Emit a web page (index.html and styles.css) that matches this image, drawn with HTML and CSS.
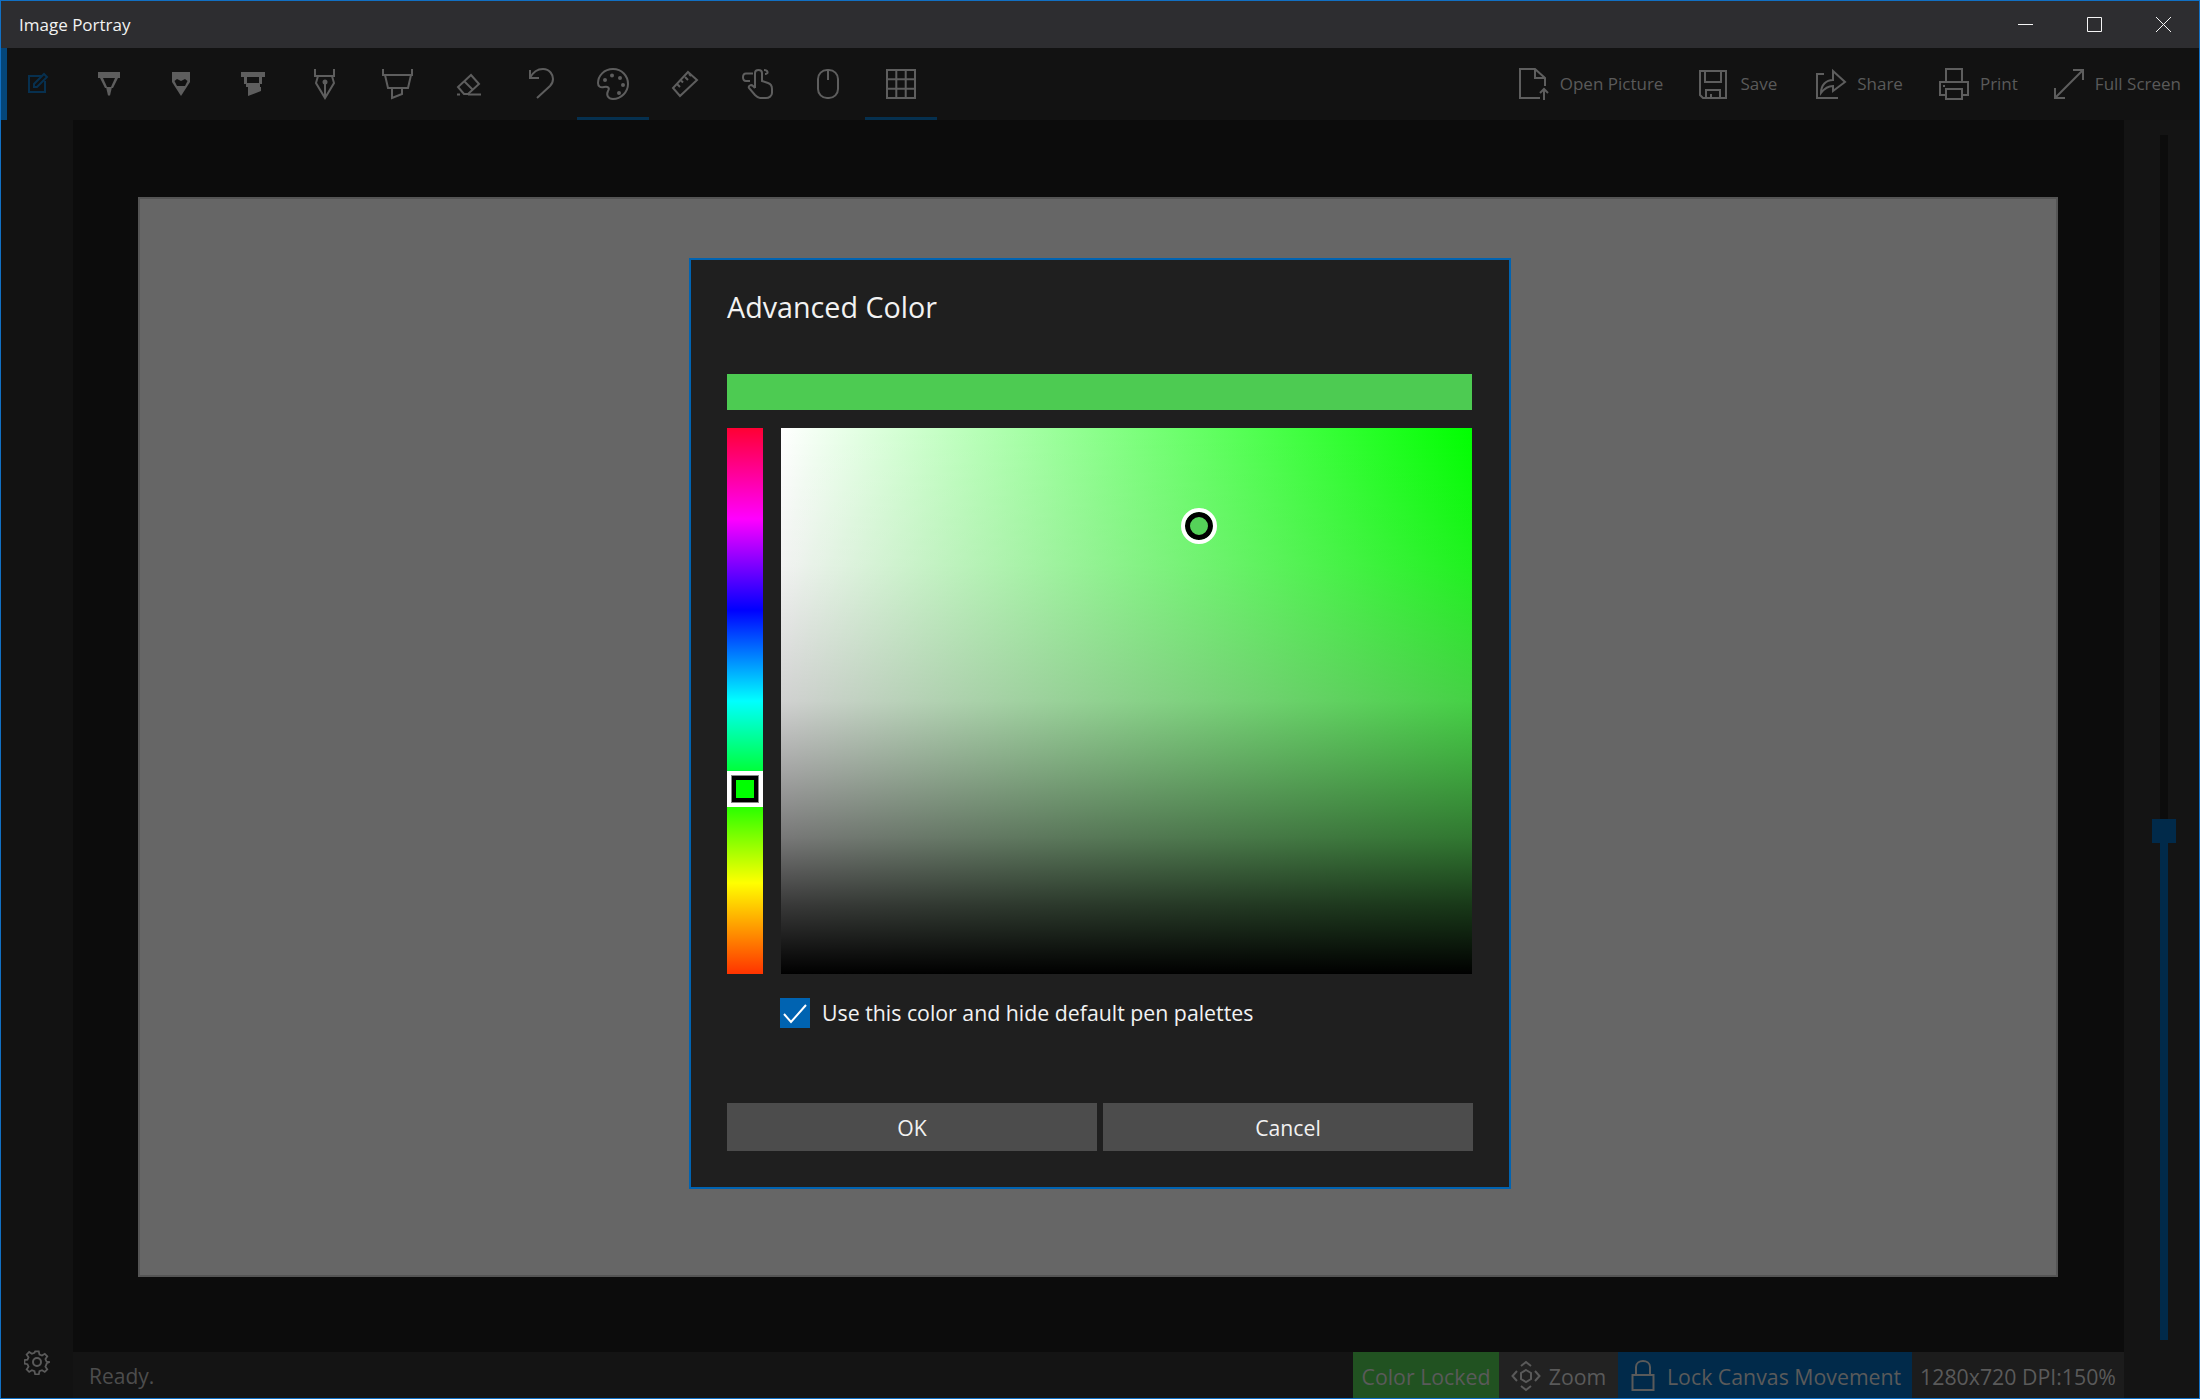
FILE: index.html
```html
<!DOCTYPE html>
<html lang="en">
<head>
<meta charset="utf-8">
<title>Image Portray</title>
<link rel="stylesheet" href="styles.css">
</head>
<body>
<div class="window">
  <header class="titlebar">
    <span class="app-title">Image Portray</span>
    <div class="winctl">
      <svg class="ctl" viewBox="0 0 15 15"><path d="M0 7.500H15"/></svg>
      <svg class="ctl" viewBox="0 0 15 15"><path d="M.5.5H14.500V14.500H.5Z"/></svg>
      <svg class="ctl" viewBox="0 0 15 15"><path d="M0 0L15 15M15 0L0 15"/></svg>
    </div>
  </header>

  <nav class="toolbar">
    <div class="tool tool-accent"><svg class="ico ico-blue" viewBox="0 0 36 36"><path d="M23 10H10V26H26V15"/><path d="M15 21V18L25 8L28 11L18 21Z"/></svg></div>
    <div class="tool"><svg class="ico" viewBox="0 0 36 36"><path class="fill" d="M7 6H29V12H27L22 22H14L9 12H7Z"/><path class="bg" d="M12 12H24L20 21H16Z"/><path class="fill" d="M15 21H21L19 29.500H17Z"/></svg></div>
    <div class="tool"><svg class="ico" viewBox="0 0 36 36"><path class="fill" d="M9 6H27V16L18 30L9 16Z"/><path class="bg" d="M11.500 15L14 13L18 15L22 13L24.500 15L22 20H14Z"/></svg></div>
    <div class="tool"><svg class="ico" viewBox="0 0 36 36"><path class="fill" d="M6 6H30V11H27V18H25V21H26V25L13 30V21H11V18H9V11H6Z"/><path class="bg" d="M12 11H24V17H12Z"/></svg></div>
    <div class="tool"><svg class="ico" viewBox="0 0 36 36"><path d="M8 3V10H27V3"/><path d="M11 10L9 17L18 32L27 17L25 10"/><path d="M18 18V31"/><circle class="fill nostroke" cx="18" cy="16" r="2.500"/></svg></div>
    <div class="tool"><svg class="ico" viewBox="0 0 36 36"><path d="M4 3V9H33V3"/><path d="M6 9L9 22H29L32 9"/><path d="M13 22V32L23 28V22"/></svg></div>
    <div class="tool"><svg class="ico" viewBox="0 0 36 36"><path d="M20 9L28 18L17 28H13L7 21Z"/><path d="M13 15L22 24"/><path d="M6 28.500H9M17 28.500H30"/></svg></div>
    <div class="tool"><svg class="ico" viewBox="0 0 36 36"><path d="M7 4V12H16"/><path d="M7 12C10 6 15 3 20 3C27 3 30 9 30 13C30 17 29 18 27 20L14 32"/></svg></div>
    <div class="tool tool-on"><svg class="ico" viewBox="0 0 36 36"><path d="M18 3C9 3 3 10 3 17C3 20 5 22 9 21C13 20 15 22 13 25C11 29 13 33 18 33C26 33 33 26 33 18C33 10 27 3 18 3Z"/><g class="fill nostroke"><circle cx="10" cy="14" r="2"/><circle cx="17" cy="9.500" r="2"/><circle cx="25" cy="12" r="2"/><circle cx="28" cy="19" r="2"/><circle cx="24" cy="27" r="2"/></g></svg></div>
    <div class="tool"><svg class="ico" viewBox="0 0 36 36"><path d="M21 6L30 14L13 30L6 22Z"/><path d="M10 18L13 21M14 14.500L16 16.500M18 11L21 14M22 8L24 10"/></svg></div>
    <div class="tool"><svg class="ico" viewBox="0 0 36 36"><path d="M16 22V7C16 3 23 3 23 7V15L29 17C32 18 33 20 33 23V27C33 30 30 32 27 32H21C19 32 18 31 16 29L10 22C9 20 12 18 14 20L16 22"/><path d="M14 7.500H7C3 7.500 3 15 7 15H11M25 4C29 4 30 8 26 8"/></svg></div>
    <div class="tool"><svg class="ico" viewBox="0 0 36 36"><rect x="7" y="4" width="20" height="28" rx="9"/><path d="M17 4V14"/></svg></div>
    <div class="tool tool-on"><svg class="ico" viewBox="0 0 36 36"><path d="M4 4H32V32H4ZM13.300 4V32M22.700 4V32M4 13.300H32M4 22.700H32"/></svg></div>

    <div class="commands">
      <div class="cmd"><svg class="ico" viewBox="0 0 36 36"><path d="M25 32H5V3H20L30 12V20M20 3V12H30"/><path d="M29 34V23M25 27L29 23L33 27"/></svg><span class="cmd-label">Open Picture</span></div>
      <div class="cmd cmd-save"><svg class="ico" viewBox="0 0 36 36"><path d="M5 5H31V32H8L5 29Z"/><path d="M10 5V16H26V5"/><path d="M11 32V24H25V32M16 28V32"/></svg><span class="cmd-label">Save</span></div>
      <div class="cmd"><svg class="ico" viewBox="0 0 36 36"><path d="M12 8H5V32H26"/><path d="M9 27C9 19 14 14 21 14V5L33 16L21 25V20C16 20 12 23 9 27Z"/></svg><span class="cmd-label">Share</span></div>
      <div class="cmd"><svg class="ico" viewBox="0 0 36 36"><path d="M11 16V3H27V16"/><path d="M11 29H5V16H33V29H27"/><path d="M11 23H27V33H11Z"/><path d="M8 20H10"/></svg><span class="cmd-label">Print</span></div>
      <div class="cmd"><svg class="ico" viewBox="0 0 36 36"><path d="M5 32L33 4M23 4H33V14M5 22V32H15"/></svg><span class="cmd-label">Full Screen</span></div>
    </div>
  </nav>

  <div class="main">
    <aside class="sidebar">
      <svg class="gear" viewBox="0 0 26 26"><path d="M11 1H15L15.800 4.600L18.700 5.800L21.800 3.800L24.600 6.600L22.500 9.700L23.700 12.500L27 13L24 14.500L23.700 15.500L22.500 18.300L24.600 21.400L21.800 24.200L18.700 22.200L15.800 23.400L15 27H11L10.200 23.400L7.300 22.200L4.200 24.200L1.400 21.400L3.500 18.300L2.300 15.500L-1 15V11L2.300 10.500L3.500 7.700L1.400 4.600L4.200 1.800L7.300 3.800L10.200 2.600Z" transform="translate(1.400 1.400) scale(.89)"/><circle cx="13" cy="13" r="4"/></svg>
    </aside>
    <div class="center">
      <section class="canvas"><div class="picture"></div></section>
      <footer class="status">
        <span class="ready">Ready.</span>
        <div class="chips">
          <span class="chip chip-color">Color Locked</span>
          <span class="chip chip-zoom"><svg class="chip-ico" viewBox="0 0 30 46"><path d="M6 19L1.500 24L6 29M24 19L28.500 24L24 29M10 14L15 10L20 14M10 34L15 38L20 34"/><path d="M15 18L20 21V27L15 30L10 27V21Z"/></svg><span>Zoom</span></span>
          <span class="chip chip-lock"><svg class="chip-ico lock" viewBox="0 0 24 46"><path d="M1.500 23H22.500V38H1.500Z"/><path d="M5 23V15C5 7 19 7 19 15V23"/></svg><span>Lock Canvas Movement</span></span>
          <span class="chip chip-dpi">1280x720 DPI:150%</span>
        </div>
      </footer>
    </div>
    <aside class="rightbar">
      <div class="track-rest"></div>
      <div class="track-fill"><div class="thumb"></div></div>
    </aside>
  </div>

  <div class="dialog">
    <h1 class="dlg-title">Advanced Color</h1>
    <div class="preview"></div>
    <div class="picker">
      <div class="hue"><div class="hue-thumb"><div class="hue-core"></div></div></div>
      <div class="sv"><div class="sv-thumb"></div></div>
    </div>
    <label class="check-row">
      <span class="check"><svg viewBox="0 0 30 30"><path d="M4 16L11 24L26 7"/></svg></span>
      <span class="check-label">Use this color and hide default pen palettes</span>
    </label>
    <div class="buttons">
      <div class="btn"><span>OK</span></div>
      <div class="btn"><span>Cancel</span></div>
    </div>
  </div>
</div>
</body>
</html>
```
FILE: styles.css
```css
* { box-sizing: border-box; }
html, body { margin: 0; height: 100%; background: #121212; }
body { font-family: "Open Sans", "Noto Sans", "Liberation Sans", sans-serif; overflow: hidden; }

.window { position: relative; width: 2200px; height: 1399px; border: 1px solid #1170c4; display: flex; flex-direction: column; background: #121212; }

.titlebar { height: 47px; background: #2d2d30; display: flex; align-items: center; justify-content: space-between; padding-left: 18px; }
.app-title { color: #f2f2f2; font-size: 17px; }
.winctl { display: flex; gap: 54px; padding-right: 28px; }
.ctl { width: 15px; height: 15px; fill: none; stroke: #f5f5f5; stroke-width: 1; display: block; }

.toolbar { height: 72px; background: #121212; display: flex; align-items: center; }
.tool { width: 72px; height: 72px; display: flex; align-items: center; justify-content: center; }
.tool-accent { border-left: 6px solid #04467a; padding-right: 6px; }
.tool-on { box-shadow: inset 0 -3px 0 #05304f; }
.ico { width: 36px; height: 36px; fill: none; stroke: #5e5e5e; stroke-width: 2; display: block; flex: none; }
.ico-blue { stroke: #07304f; }
.fill { fill: #5e5e5e; stroke: none; }
.bg { fill: #121212; stroke: none; }
.nostroke { stroke: none; }

.commands { margin-left: auto; display: flex; align-items: center; gap: 32px; padding-right: 18px; }
.cmd { display: flex; align-items: center; gap: 9px; }
.cmd-save { margin-right: 3px; }
.cmd-label { color: #5a5a5a; font-size: 17px; padding-bottom: 2px; }

.main { flex: 1; display: grid; grid-template-columns: 72px 1fr 75px; min-height: 0; }
.sidebar { background: #121212; display: flex; flex-direction: column; justify-content: flex-end; align-items: center; padding-bottom: 23px; }
.gear { width: 26px; height: 26px; fill: none; stroke: #5a5a5a; stroke-width: 2; }
.center { display: flex; flex-direction: column; min-width: 0; }
.canvas { flex: 1; background: #0c0c0c; padding: 77px 0 0 65px; }
.picture { width: 1920px; height: 1080px; background: #666; border: 2px solid #555; }

.status { height: 46px; background: #141414; display: flex; align-items: stretch; justify-content: space-between; padding-left: 16px; font-size: 21.3px; color: #5a5a5a; }
.ready { align-self: center; color: #4d4d4d; padding-top: 2px; font-size: 21px; }
.chips { display: flex; align-items: stretch; }
.chip { display: flex; align-items: center; white-space: nowrap; padding-top: 2px; }
.chip-color { background: #215221; width: 146px; justify-content: center; }
.chip-zoom { background: #222; width: 119px; justify-content: center; gap: 8px; }
.chip-lock { background: #012a4a; width: 294px; padding-left: 13px; gap: 12px; }
.chip-dpi { background: #1c1c1c; width: 212px; justify-content: center; }
.chip-ico { width: 30px; height: 46px; fill: none; stroke: #5a5a5a; stroke-width: 2; flex: none; margin-top: -2px; }
.lock { width: 24px; }

.rightbar { background: #141414; padding: 15px 0 58px 36px; display: flex; flex-direction: column; }
.track-rest { flex: 1; width: 8px; background: #0c0c0c; }
.track-fill { position: relative; height: 509px; width: 8px; background: #012a4a; }
.thumb { position: absolute; left: -8px; top: -12px; width: 24px; height: 24px; background: #012a4a; }

.dialog { position: absolute; left: 688px; top: 257px; width: 822px; height: 931px; background: #1f1f1f; border: 2px solid #0063b1; padding: 0 36px; }
.dlg-title { margin: 0; height: 114px; padding-top: 23px; font-size: 28.7px; font-weight: 400; color: #f2f2f2; line-height: 48px; }
.preview { height: 36px; background: #4dcb52; margin-right: 1px; }
.picker { display: flex; gap: 18px; margin: 18px 1px 0 0; height: 546px; }
.hue { position: relative; width: 36px; background: linear-gradient(to bottom, #f03 0%, #f0f 16.67%, #00f 33.33%, #0ff 50%, #0f0 66.67%, #ff0 83.33%, #f30 100%); }
.hue-thumb { position: absolute; left: 0; top: 343px; width: 36px; height: 36px; background: #000; border: 4px solid #fff; display: flex; align-items: center; justify-content: center; box-shadow: inset 0 0 0 1px #888; }
.hue-core { width: 18px; height: 18px; background: #0f0; }
.sv { position: relative; flex: 1; background:
  linear-gradient(to bottom, rgba(0,0,0,0) 0%, rgba(0,0,0,.05) 25%, rgba(0,0,0,.18) 50%, rgba(0,0,0,.35) 62.5%, rgba(0,0,0,.53) 75%, rgba(0,0,0,.78) 87.5%, #000 100%),
  linear-gradient(to bottom, rgba(255,255,255,0) 0%, rgba(255,255,255,.125) 25%, rgba(255,255,255,.33) 50%, rgba(255,255,255,.4) 75%, rgba(255,255,255,.45) 100%),
  linear-gradient(to right, #fff, #0f0); }
.sv-thumb { position: absolute; left: 400px; top: 80px; width: 36px; height: 36px; border-radius: 50%; background: #55d259; border: 4px solid #fff; box-shadow: inset 0 0 0 5px #000; }

.check-row { display: flex; align-items: center; gap: 12px; margin: 24px 0 0 53px; height: 30px; }
.check { width: 30px; height: 30px; background: #0063b1; display: block; flex: none; }
.check svg { display: block; fill: none; stroke: #fff; stroke-width: 2; }
.check-label { color: #f2f2f2; font-size: 21.3px; padding-bottom: 2px; }

.buttons { display: flex; gap: 6px; margin-top: 75px; }
.btn { flex: 1; height: 48px; background: #4c4c4c; color: #f2f2f2; font-size: 21.2px; display: flex; align-items: center; justify-content: center; }
```
